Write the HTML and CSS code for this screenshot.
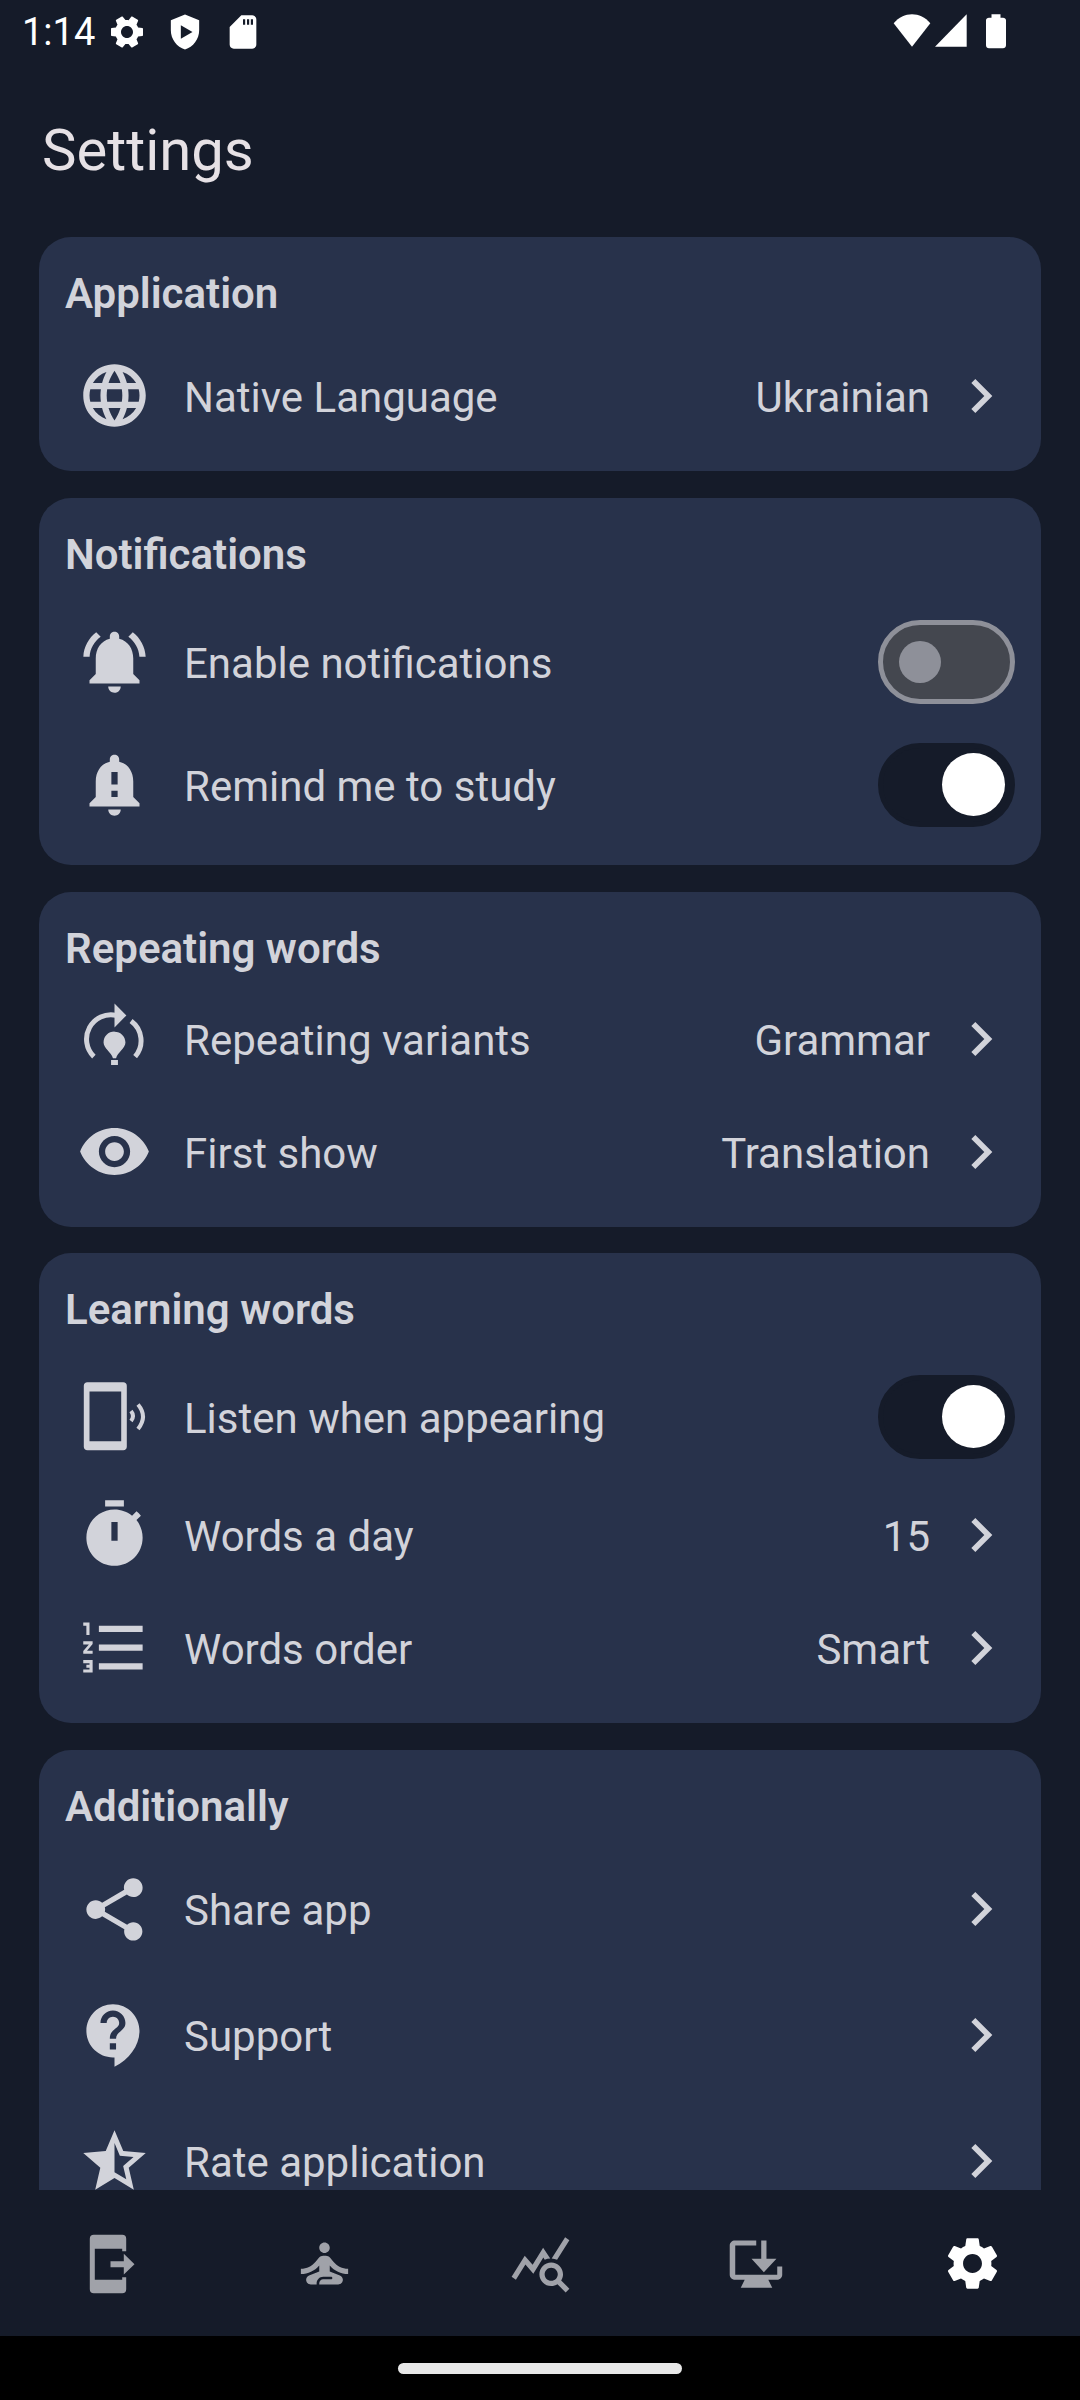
FILE: index.html
```html
<!DOCTYPE html>
<html lang="en">
<head>
  <meta charset="UTF-8">
  <title>Settings</title>
  <link rel="stylesheet" href="styles.css">
</head>
<body>
  <svg class="defs" width="0" height="0">
    <symbol id="chevron" viewBox="0 0 24 24"><path d="M10 6L8.59 7.41 13.17 12l-4.58 4.59L10 18l6-6z"/></symbol>
    <symbol id="gear" viewBox="0 0 24 24"><path d="M19.14 12.94c.04-.3.06-.61.06-.94 0-.32-.02-.64-.07-.94l2.03-1.58c.18-.14.23-.41.12-.61l-1.92-3.32c-.12-.22-.37-.29-.59-.22l-2.39.96c-.5-.38-1.03-.7-1.62-.94l-.36-2.54c-.04-.24-.24-.41-.48-.41h-3.84c-.24 0-.43.17-.47.41l-.36 2.54c-.59.24-1.13.57-1.62.94l-2.39-.96c-.22-.08-.47 0-.59.22L2.74 8.87c-.12.21-.08.47.12.61l2.03 1.58c-.05.3-.09.63-.09.94s.02.64.07.94l-2.03 1.58c-.18.14-.23.41-.12.61l1.92 3.32c.12.22.37.29.59.22l2.39-.96c.5.38 1.03.7 1.62.94l.36 2.54c.05.24.24.41.48.41h3.84c.24 0 .44-.17.47-.41l.36-2.54c.59-.24 1.13-.56 1.62-.94l2.39.96c.22.08.47 0 .59-.22l1.92-3.32c.12-.22.07-.47-.12-.61l-2.01-1.58zM12 15.6c-1.98 0-3.6-1.62-3.6-3.6s1.62-3.6 3.6-3.6 3.6 1.62 3.6 3.6-1.62 3.6-3.6 3.6z"/></symbol>
  </svg>

  <div class="status-bar">
    <span class="time">1:14</span>
    <svg class="st-icon" viewBox="0 0 24 24"><g transform="rotate(90 12 12)"><path d="M19.14 12.94c.04-.3.06-.61.06-.94 0-.32-.02-.64-.07-.94l2.03-1.58c.18-.14.23-.41.12-.61l-1.92-3.32c-.12-.22-.37-.29-.59-.22l-2.39.96c-.5-.38-1.03-.7-1.62-.94l-.36-2.54c-.04-.24-.24-.41-.48-.41h-3.84c-.24 0-.43.17-.47.41l-.36 2.54c-.59.24-1.13.57-1.62.94l-2.39-.96c-.22-.08-.47 0-.59.22L2.74 8.87c-.12.21-.08.47.12.61l2.03 1.58c-.05.3-.09.63-.09.94s.02.64.07.94l-2.03 1.58c-.18.14-.23.41-.12.61l1.92 3.32c.12.22.37.29.59.22l2.39-.96c.5.38 1.03.7 1.62.94l.36 2.54c.05.24.24.41.48.41h3.84c.24 0 .44-.17.47-.41l.36-2.54c.59-.24 1.13-.56 1.62-.94l2.39.96c.22.08.47 0 .59-.22l1.92-3.32c.12-.22.07-.47-.12-.61l-2.01-1.58zM12 15.6c-1.98 0-3.6-1.62-3.6-3.6s1.62-3.6 3.6-3.6 3.6 1.62 3.6 3.6-1.62 3.6-3.6 3.6z"/></g></svg>
    <svg class="st-icon" viewBox="0 0 24 24"><path fill-rule="evenodd" d="M12 1.5L3.5 5v6c0 5.3 3.6 10.2 8.5 11.5 4.9-1.3 8.500-6.200 8.500-11.500V5L12 1.500zM9.500 8l7 4-7 4V8z"/></svg>
    <svg class="st-icon" viewBox="0 0 24 24"><path fill-rule="evenodd" d="M11 2h6.500C18.900 2 20 3.100 20 4.500v15c0 1.400-1.100 2.500-2.500 2.500h-11C5.100 22 4 20.900 4 19.500V9l7-7zM12 4.400v3.200h1.300V4.400H12zm2.400 0v3.200h1.300V4.400h-1.300zm2.300 0v3.200H18V4.400h-1.300z"/></svg>
    <span class="spacer"></span>
    <svg class="st-icon st-wifi" viewBox="0 0 24 24"><path d="M12 20.800L1 6.800C4 3.200 8 1.400 12 1.400s8 1.800 11 5.400L12 20.800z"/></svg>
    <svg class="st-icon st-signal" viewBox="0 0 24 24"><path d="M21.400 1.400v19.400H2.400L21.400 1.400z"/></svg>
    <svg class="st-icon st-battery" viewBox="0 0 24 24"><path d="M9.300 1.400h5.400v2h1.500c1 0 1.800.6 1.800 1.600v15c0 1-.8 1.800-1.800 1.800H7.800c-1 0-1.800-.8-1.800-1.800V5c0-1 .8-1.600 1.800-1.600h1.500v-2z"/></svg>
  </div>

  <h1 class="page-title">Settings</h1>

  <div class="scroll">
    <section class="card">
      <h2 class="card-title">Application</h2>
      <div class="row">
        <svg class="icon" viewBox="0 0 24 24"><path d="M11.99 2C6.47 2 2 6.48 2 12s4.47 10 9.99 10C17.52 22 22 17.52 22 12S17.52 2 11.99 2zm6.93 6h-2.95c-.32-1.25-.78-2.45-1.38-3.56 1.84.63 3.37 1.91 4.33 3.56zM12 4.04c.83 1.2 1.48 2.53 1.91 3.96h-3.82c.43-1.43 1.08-2.76 1.91-3.96zM4.26 14C4.1 13.36 4 12.69 4 12s.1-1.36.26-2h3.38c-.08.66-.14 1.32-.14 2 0 .68.06 1.34.14 2H4.26zm.82 2h2.95c.32 1.25.78 2.45 1.38 3.56-1.84-.63-3.37-1.9-4.33-3.56zm2.95-8H5.08c.96-1.66 2.49-2.93 4.33-3.56C8.81 5.55 8.35 6.75 8.03 8zM12 19.96c-.83-1.2-1.48-2.53-1.91-3.96h3.82c-.43 1.43-1.08 2.76-1.91 3.96zM14.34 14H9.66c-.09-.66-.16-1.32-.16-2 0-.68.07-1.35.16-2h4.68c.09.65.16 1.32.16 2 0 .68-.07 1.34-.16 2zm.25 5.56c.6-1.11 1.06-2.31 1.38-3.56h2.95c-.96 1.65-2.49 2.93-4.33 3.56zM16.36 14c.08-.66.14-1.32.14-2 0-.68-.06-1.34-.14-2h3.38c.16.64.26 1.31.26 2s-.1 1.36-.26 2h-3.38z"/></svg>
        <span class="label">Native Language</span>
        <span class="value">Ukrainian</span>
        <svg class="chevron"><use href="#chevron"/></svg>
      </div>
    </section>

    <section class="card">
      <h2 class="card-title">Notifications</h2>
      <div class="row row-tall">
        <svg class="icon" viewBox="0 0 24 24"><path d="M7.58 4.08L6.15 2.65C3.75 4.48 2.17 7.3 2.03 10.5h2c.15-2.65 1.51-4.97 3.55-6.42zm12.39 6.42h2c-.15-3.2-1.73-6.02-4.12-7.85l-1.42 1.43c2.02 1.45 3.39 3.77 3.54 6.42zM18 11c0-3.07-1.64-5.64-4.5-6.32V4c0-.83-.67-1.5-1.5-1.5s-1.5.67-1.5 1.5v.68C7.63 5.36 6 7.92 6 11v5l-2 2v1h16v-1l-2-2v-5zm-6 11c.14 0 .27-.01.4-.04.65-.14 1.18-.58 1.44-1.18.1-.24.15-.5.15-.78h-4c.01 1.1.9 2 2.01 2z"/></svg>
        <span class="label">Enable notifications</span>
        <span class="switch"></span>
      </div>
      <div class="row row-tall">
        <svg class="icon" viewBox="0 0 24 24"><path d="M18 16v-5c0-3.07-1.63-5.64-4.5-6.32V4c0-.83-.67-1.5-1.5-1.5s-1.5.67-1.5 1.5v.68C7.64 5.36 6 7.92 6 11v5l-2 2v1h16v-1l-2-2zm-5 0h-2v-2h2v2zm0-4h-2V8h2v4zm-1 10c1.1 0 2-.9 2-2h-4c0 1.1.9 2 2 2z"/></svg>
        <span class="label">Remind me to study</span>
        <span class="switch on"></span>
      </div>
    </section>

    <section class="card card-tight">
      <h2 class="card-title">Repeating words</h2>
      <div class="row">
        <svg class="icon" viewBox="0 0 24 24">
          <path class="line" d="M5.4 17.8A7.8 7.8 0 0 1 12.5 4.6M17.3 6.4A7.8 7.8 0 0 1 18.6 17.8"/>
          <path d="M12 .8l3.8 3.8L12 8.5zM12 9.8c2 0 3.5 1.5 3.5 3.5 0 1.8-2.5 3.2-3 5h-1c-.5-1.8-3-3.2-3-5 0-2 1.5-3.5 3.5-3.5zM10.900 18.900h2.200v1.600h-2.200z"/>
        </svg>
        <span class="label">Repeating variants</span>
        <span class="value">Grammar</span>
        <svg class="chevron"><use href="#chevron"/></svg>
      </div>
      <div class="row">
        <svg class="icon" viewBox="0 0 24 24"><path d="M12 4.5C7 4.5 2.73 7.61 1 12c1.73 4.39 6 7.5 11 7.5s9.27-3.11 11-7.5c-1.73-4.39-6-7.5-11-7.5zM12 17c-2.76 0-5-2.24-5-5s2.24-5 5-5 5 2.24 5 5-2.24 5-5 5zm0-8c-1.66 0-3 1.34-3 3s1.34 3 3 3 3-1.34 3-3-1.34-3-3-3z"/></svg>
        <span class="label">First show</span>
        <span class="value">Translation</span>
        <svg class="chevron"><use href="#chevron"/></svg>
      </div>
    </section>

    <section class="card">
      <h2 class="card-title">Learning words</h2>
      <div class="row row-tall">
        <svg class="icon" viewBox="0 0 75 75">
          <path fill-rule="evenodd" d="M10.300 3.200h36c2 0 3.500 1.500 3.500 3.500v61c0 2-1.500 3.500-3.500 3.500h-36c-2 0-3.500-1.500-3.500-3.500v-61c0-2 1.500-3.500 3.500-3.500zM12.500 12.500v49.700h31.700V12.500z"/>
          <path class="line-wave" d="M54 32Q58 37 54 42M61 25.500Q71 37.500 61 50"/>
        </svg>
        <span class="label">Listen when appearing</span>
        <span class="switch on"></span>
      </div>
      <div class="row">
        <svg class="icon" viewBox="0 0 24 24"><path fill-rule="evenodd" d="M15 1H9v2h6V1zm-4 13h2V8h-2v6zm8.03-6.61l1.42-1.42c-.43-.51-.9-.99-1.41-1.41l-1.42 1.42C16.07 4.74 14.12 4 12 4c-4.97 0-9 4.03-9 9s4.02 9 9 9 9-4.03 9-9c0-2.12-.74-4.07-1.97-5.61z"/></svg>
        <span class="label">Words a day</span>
        <span class="value">15</span>
        <svg class="chevron"><use href="#chevron"/></svg>
      </div>
      <div class="row">
        <svg class="icon" viewBox="0 0 24 24"><path d="M2 17h2v.5H3v1h1v.5H2v1h3v-4H2v1zm1-9h1V4H2v1h1v3zm-1 3h1.8L2 13.1v.9h3v-1H3.2L5 10.9V10H2v1zm5-6v2h14V5H7zm0 14h14v-2H7v2zm0-6h14v-2H7v2z"/></svg>
        <span class="label">Words order</span>
        <span class="value">Smart</span>
        <svg class="chevron"><use href="#chevron"/></svg>
      </div>
    </section>

    <section class="card card-wide">
      <h2 class="card-title">Additionally</h2>
      <div class="row">
        <svg class="icon" viewBox="0 0 24 24"><path d="M18 16.08c-.76 0-1.44.3-1.96.77L8.91 12.7c.05-.23.09-.46.09-.7s-.04-.47-.09-.7l7.05-4.11c.54.5 1.25.81 2.04.81 1.66 0 3-1.34 3-3s-1.34-3-3-3-3 1.34-3 3c0 .24.04.47.09.7L8.04 9.81C7.5 9.31 6.79 9 6 9c-1.66 0-3 1.34-3 3s1.34 3 3 3c.79 0 1.5-.31 2.04-.81l7.12 4.16c-.05.21-.08.43-.08.65 0 1.61 1.31 2.92 2.92 2.92s2.92-1.31 2.92-2.92-1.31-2.92-2.92-2.92z"/></svg>
        <span class="label">Share app</span>
        <svg class="chevron"><use href="#chevron"/></svg>
      </div>
      <div class="row">
        <svg class="icon" viewBox="0 0 24 24"><path d="M11.5 2C6.81 2 3 5.81 3 10.5S6.81 19 11.5 19h.5v3c4.86-2.34 8-7 8-11.5C20 5.81 16.19 2 11.5 2zm1 14.5h-2v-2h2v2zm0-3.5h-2c0-3.25 3-3 3-5 0-1.1-.9-2-2-2s-2 .9-2 2h-2c0-2.21 1.79-4 4-4s4 1.79 4 4c0 2.5-3 2.75-3 5z"/></svg>
        <span class="label">Support</span>
        <svg class="chevron"><use href="#chevron"/></svg>
      </div>
      <div class="row">
        <svg class="icon" viewBox="0 0 24 24"><path d="M22 9.24l-7.19-.62L12 2 9.19 8.63 2 9.24l5.46 4.73L5.82 21 12 17.27 18.18 21l-1.63-7.03L22 9.24zM12 15.4V6.1l1.71 4.04 4.38.38-3.32 2.88 1 4.28L12 15.4z"/></svg>
        <span class="label">Rate application</span>
        <svg class="chevron"><use href="#chevron"/></svg>
      </div>
    </section>
  </div>

  <nav class="bottom-nav">
    <svg class="nav-icon" viewBox="0 0 63 63"><path d="M16.800 2.800h28.400a4 4 0 0 1 4 4v12.400h-4v-2.400H17.800v31h27.400v-2.600h4v12a4 4 0 0 1-4 4H16.800a4 4 0 0 1-4-4V6.800a4 4 0 0 1 4-4z"/><path d="M33.500 29.200h13.300v-7.400l10.700 10.400-10.700 10.300v-7.300H33.500z"/></svg>
    <svg class="nav-icon" viewBox="0 0 24 24"><path d="M12 4c1.100 0 2 .9 2 2s-.9 2-2 2-2-.9-2-2 .9-2 2-2zm9 12v-2c-2.240 0-4.160-.96-5.600-2.680l-1.340-1.600C13.680 9.260 13.120 9 12.530 9h-1.050c-.59 0-1.150.26-1.530.72l-1.340 1.600C7.160 13.040 5.240 14 3 14v2c2.770 0 5.190-1.170 7-3.250V15l-3.880 1.550c-.67.27-1.120.93-1.120 1.660C5 19.200 5.800 20 6.790 20H9v-.5c0-1.380 1.120-2.500 2.500-2.500h3c.28 0 .5.220.5.500s-.22.5-.5.5h-3c-.83 0-1.500.67-1.500 1.500v.5h7.210c.99 0 1.790-.8 1.790-1.790 0-.73-.45-1.390-1.120-1.660L14 15v-2.250c1.810 2.080 4.230 3.250 7 3.250z"/></svg>
    <svg class="nav-icon" viewBox="0 0 24 24"><path d="M19.880 18.470c.44-.7.7-1.510.7-2.390 0-2.490-2.010-4.500-4.500-4.500s-4.500 2.010-4.500 4.500 2.010 4.500 4.490 4.500c.88 0 1.700-.26 2.390-.7L21.580 23 23 21.580l-3.120-3.110zm-3.800.11c-1.380 0-2.500-1.120-2.500-2.500s1.120-2.500 2.500-2.500 2.500 1.120 2.500 2.500-1.120 2.500-2.500 2.500zm-.36-8.500c-.74.02-1.450.18-2.100.45l-.55-.83-3.800 6.180-3.010-3.520-3.630 5.810L1 17l5-8 3 3.500L13 6l2.720 4.080zm2.590.5c-.64-.28-1.330-.45-2.050-.49L21.380 2 23 3.180l-4.690 7.400z"/></svg>
    <svg class="nav-icon" viewBox="0 0 24 24"><path d="M3.800 3.200h8.100v1.900h-8v11.200h16v-3.200h1.900v3.200c0 1.100-.9 1.900-1.900 1.900h-3.400l1.500 3H6l1.500-3H3.800c-1.100 0-2-.8-2-1.900V5.100c0-1.100.9-1.900 2-1.900z"/><path d="M13.800 3.200h2v7h3.800l-4.800 5.100-4.700-5.100h3.700z"/></svg>
    <svg class="nav-icon active" viewBox="0 0 24 24"><use href="#gear"/></svg>
  </nav>

  <div class="gesture-bar"><span class="handle"></span></div>
</body>
</html>
```

FILE: styles.css
```css
* {
  box-sizing: border-box;
}

html, body {
  margin: 0;
  padding: 0;
}

body {
  width: 1080px;
  height: 2400px;
  display: flex;
  flex-direction: column;
  overflow: hidden;
  background: #151b29;
  font-family: Roboto, sans-serif;
  color: #d2d3da;
}

.defs {
  position: absolute;
}

.status-bar {
  height: 64px;
  flex: none;
  display: flex;
  align-items: center;
  padding: 0 64px 0 22px;
  color: #fff;
}

.time {
  font-size: 38px;
  margin-right: 12px;
}

.st-icon {
  width: 40px;
  height: 40px;
  margin-right: 18px;
  fill: #fff;
}

.st-wifi {
  margin-right: -1px;
}

.st-signal {
  margin-right: 5px;
}

.st-battery {
  margin-right: 0;
}

.spacer {
  flex: 1;
}

.page-title {
  height: 173px;
  flex: none;
  margin: 0;
  padding: 54px 0 0 42px;
  font-size: 58px;
  line-height: 64px;
  font-weight: 400;
  color: #e6e1e5;
}

.scroll {
  flex: 1;
  overflow: hidden;
  padding: 0 39px;
}

.card {
  background: #28324b;
  border-radius: 32px;
  margin-bottom: 27px;
  padding: 26px 23px 19px 26px;
}

.card-title {
  margin: 0 0 18px;
  height: 58px;
  font-size: 42px;
  line-height: 61px;
  font-weight: 600;
}

.card-tight {
  margin-bottom: 26px;
}

.card-tight .card-title {
  margin-bottom: 6px;
}

.card-wide .card-title {
  margin-bottom: 12px;
}

.card-wide .row {
  height: 126px;
}

.row {
  height: 113px;
  display: flex;
  align-items: center;
  font-size: 42px;
}

.row-tall {
  height: 123px;
}

.icon {
  width: 75px;
  height: 75px;
  flex: none;
  margin-left: 12px;
  margin-right: 32px;
  fill: #d2d3da;
}

.line {
  fill: none;
  stroke: #d2d3da;
  stroke-width: 1.6;
}

.line-wave {
  fill: none;
  stroke: #d2d3da;
  stroke-width: 4;
}

.label {
  flex: 1;
  padding-top: 3px;
}

.value {
  margin-right: 16px;
  padding-top: 3px;
}

.chevron {
  width: 68px;
  height: 68px;
  flex: none;
  margin: 0 3px 0 1px;
  fill: #d2d3da;
}

.switch {
  position: relative;
  width: 137px;
  height: 84px;
  margin-right: 3px;
  border: 5px solid #8e9099;
  border-radius: 42px;
  background: #44474f;
}

/* thumb sits on top of the track */
.switch::after {
  content: "";
  position: absolute;
  left: 16px;
  top: 16px;
  width: 42px;
  height: 42px;
  border-radius: 50%;
  background: #8e9099;
}

.switch.on {
  border-color: #151b29;
  background: #151b29;
}

.switch.on::after {
  left: 59px;
  top: 5px;
  width: 63px;
  height: 63px;
  background: #fff;
}

.bottom-nav {
  height: 146px;
  flex: none;
  display: grid;
  grid-template-columns: repeat(5, 216px);
  justify-items: center;
  align-items: center;
}

.nav-icon {
  width: 63px;
  height: 63px;
  fill: #a0a2a9;
}

.nav-icon.active {
  fill: #fff;
}

.gesture-bar {
  height: 64px;
  flex: none;
  background: #000;
  display: flex;
  justify-content: center;
  padding-top: 27px;
}

.handle {
  width: 284px;
  height: 11px;
  border-radius: 6px;
  background: #e8e8e8;
}
```
